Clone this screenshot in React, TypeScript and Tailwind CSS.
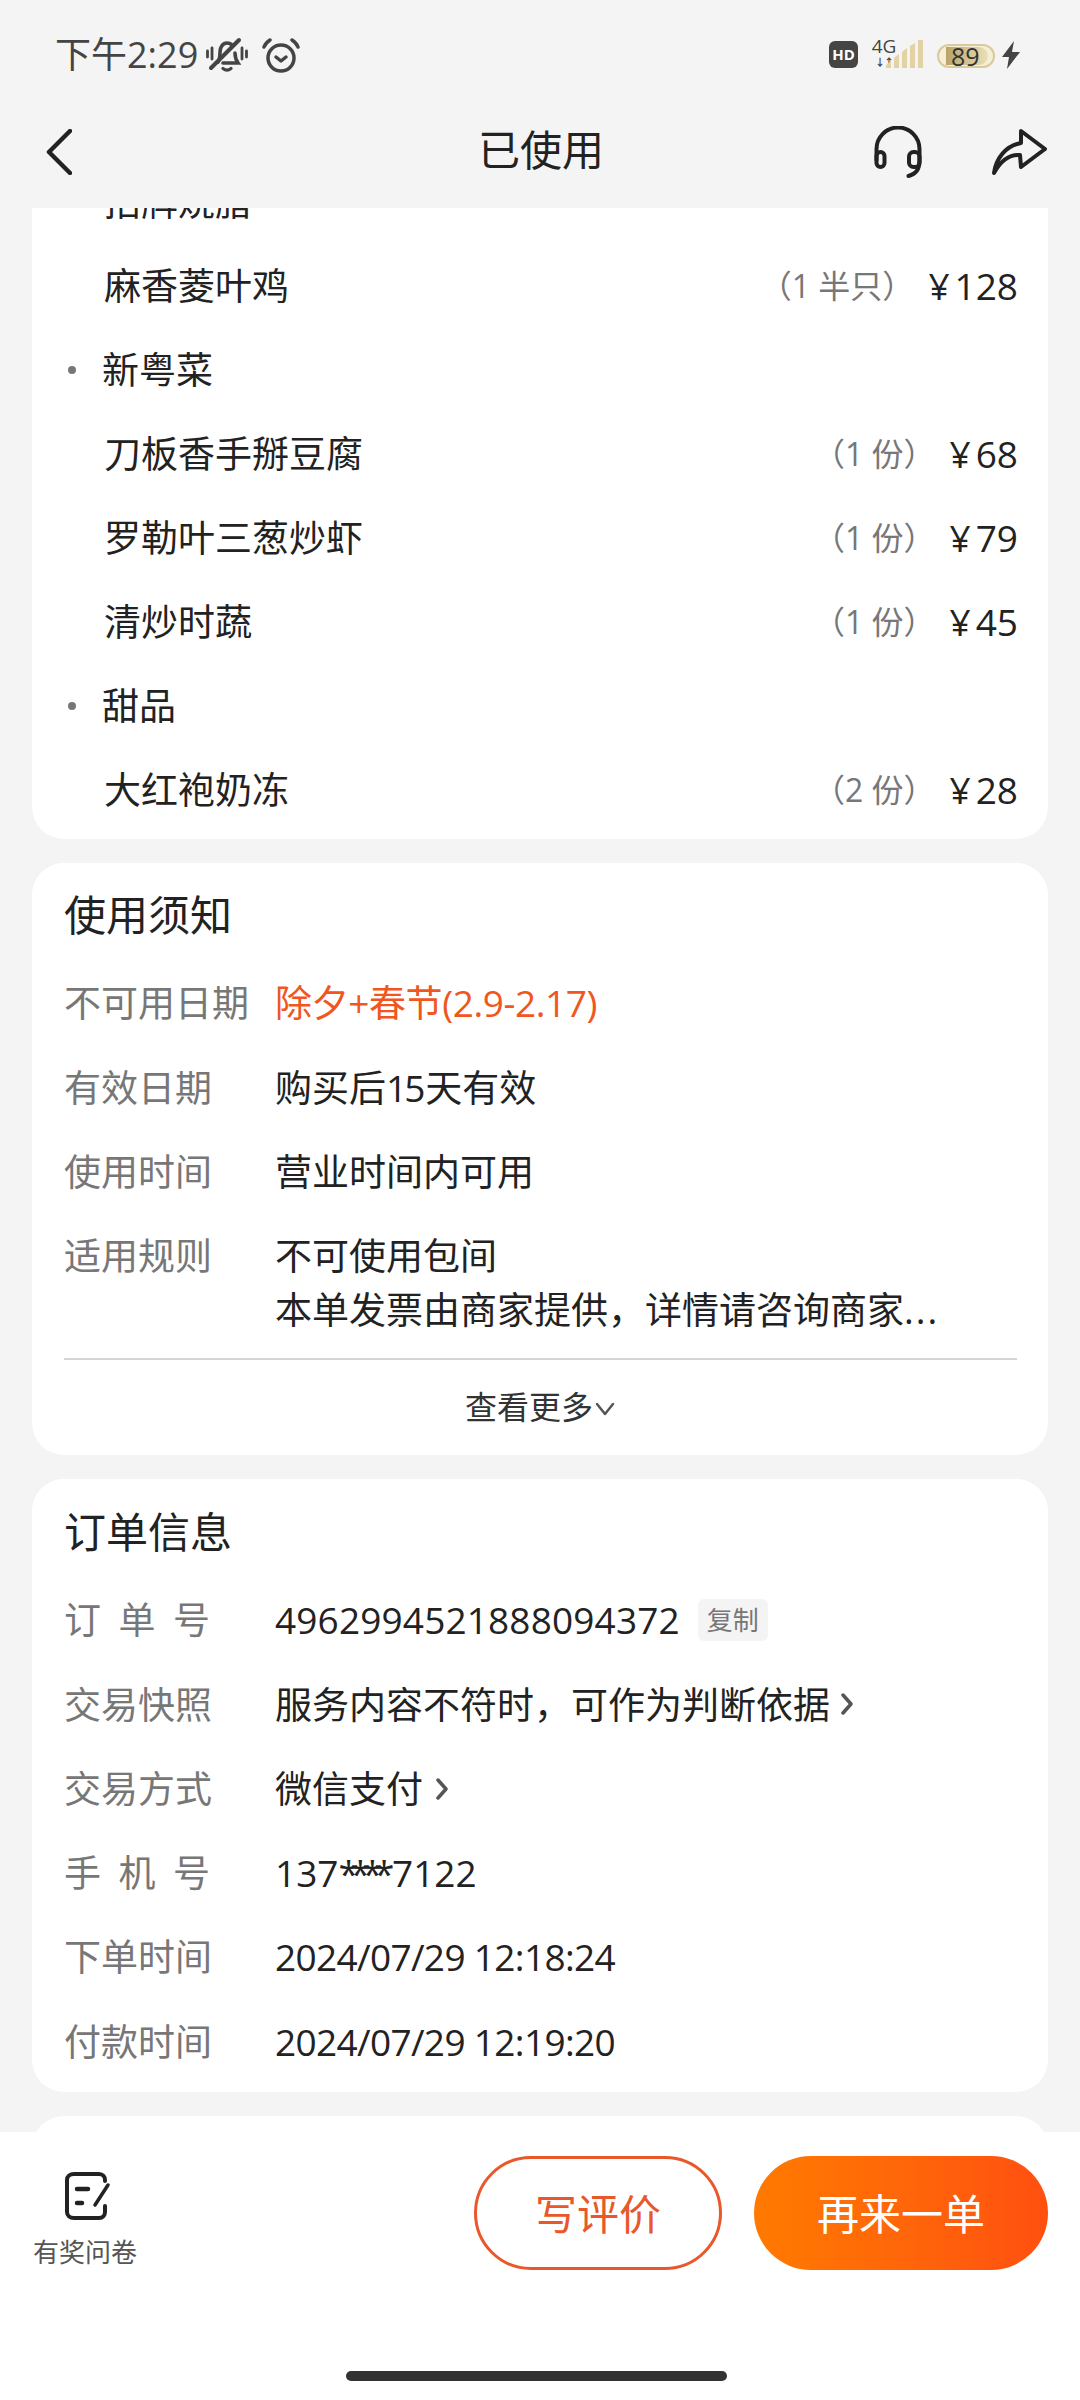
import React from 'react'

const FONT = 'font-["Open_Sans","Noto_Sans_CJK_SC",sans-serif]'

function MuteBell() {
    return (
        <svg width="42" height="36" viewBox="0 0 42 36" fill="none" stroke="#444" strokeWidth="3" strokeLinecap="round">
            <path d="M1.5 14v6M6 11v11M36 11v11M40.5 14v6" strokeWidth="2.800" />
            <path d="M12 25c2-3 2-6 2-10 0-5 3-9 7-9 2 0 4 .8 5.500 2.500M29 16c0 4 1 7 3 10H17" strokeWidth="3.600" />
            <path d="M17 31.500c2.500 2 5.500 2 8 0" strokeWidth="3.200" />
            <path d="M5 31 33 3" strokeWidth="4" />
        </svg>
    )
}

function Alarm() {
    return (
        <svg width="38" height="35" viewBox="0 0 38 35" fill="none" stroke="#444" strokeWidth="3.500" strokeLinecap="round" strokeLinejoin="round">
            <circle cx="19" cy="20" r="13" />
            <path d="M14 19l5 4 5-4" />
            <path d="M2 9c1-3 3-5 6-7M36 9c-1-3-3-5-6-7" />
        </svg>
    )
}

function SignalBars() {
    return (
        <svg width="38" height="28" viewBox="0 0 38 28">
            <path d="M0 28v-3l5-4v7zM8 28v-10l5-4v14zM16 28v-16l5-4v20zM24 28v-22l5-3v25zM32 28v-28l5-1v29z" fill="#e3d3a4" />
        </svg>
    )
}

function Bolt() {
    return (
        <svg width="18" height="28" viewBox="0 0 18 28" fill="#444">
            <path d="M12 0 0 16h7l-2 12L18 11h-8z" />
        </svg>
    )
}

function StatusBar() {
    return (
        <div className="flex h-[100px] items-start justify-between pl-[55px] pr-[60px] pt-[37px]">
            <div className="flex items-center">
                <span className="text-[36px] leading-[36px] text-[#444]">下午2:29</span>
                <span className="ml-[8px]"><MuteBell /></span>
                <span className="ml-[14px]"><Alarm /></span>
            </div>
            <div className="flex items-start">
                <div className="mt-[4px] flex h-[27px] w-[29px] items-center justify-center rounded-[6px] bg-[#444] text-[15px] font-bold leading-none text-white">HD</div>
                <div className="ml-[12px] flex h-[32px] w-[28px] flex-col items-center">
                    <span className="text-[19px] leading-[19px] text-[#444]">4G</span>
                    <span className="mt-[1px] text-[10px] font-bold leading-[11px] tracking-[-1px] text-[#444]">↓↑</span>
                </div>
                <div className="ml-[-12px] mt-[3px]"><SignalBars /></div>
                <div className="relative ml-[13px] mt-[7px] h-[24px] w-[58px] rounded-full border-2 border-[#d9c99b] bg-[#f6efd8]">
                    <div className="ml-[7px] mt-[1px] h-[18px] w-[42px] rounded-r-full bg-gradient-to-r from-[#b9a468] to-[#eadfb8]"></div>
                    <span className="absolute left-[12px] top-[-3px] text-[25px] leading-[26px] text-[#333]">89</span>
                </div>
                <div className="ml-[7px] mt-[4px]"><Bolt /></div>
            </div>
        </div>
    )
}

function NavBar() {
    return (
        <div className="relative mb-[4px] flex h-[104px] items-center justify-between pl-[46px] pr-[33px]">
            <svg width="26" height="46" viewBox="0 0 26 46" fill="none" stroke="#222" strokeWidth="4.500" strokeLinecap="round" strokeLinejoin="round">
                <path d="M24 2 3 23l21 21" />
            </svg>
            <span className="absolute left-[478px] top-[26px] text-[42px] leading-[48px] text-[#222]">已使用</span>
            <div className="flex items-center">
                <svg width="48" height="52" viewBox="0 0 48 52" fill="none" stroke="#222" strokeWidth="4" strokeLinecap="round" strokeLinejoin="round">
                    <path d="M2.500 34V23a21.500 21.500 0 0 1 43 0v12c0 8-3 13-11 15" />
                    <rect x="2.500" y="26" width="8" height="15" rx="4" />
                    <rect x="35" y="26" width="10.500" height="15" rx="4.500" />
                </svg>
                <svg className="ml-[69px]" width="56" height="48" viewBox="0 0 56 48" fill="none" stroke="#222" strokeWidth="4" strokeLinecap="round" strokeLinejoin="round">
                    <path d="M3 45C5 31 14 18 30 15V3l24 18-24 18-1-12C18 26 9 34 3 45Z" />
                </svg>
            </div>
        </div>
    )
}

function CategoryRow({ name }: { name: string }) {
    return (
        <div className="flex h-[84px] items-center">
            <span className="ml-[36px] h-[8px] w-[8px] rounded-full bg-[#777]"></span>
            <span className="ml-[26px] text-[37px] text-[#222]">{name}</span>
        </div>
    )
}

function DishRow({ name, qty, price }: { name: string; qty?: string; price?: string }) {
    return (
        <div className="flex h-[84px] items-center justify-between pl-[72px] pr-[30px]">
            <span className="text-[37px] text-[#222]">{name}</span>
            {price && (
                <div className="flex items-center">
                    <span className="text-[32px] text-[#777]">（{qty}）</span>
                    <span className="ml-[14px] text-[37px] text-[#222]">¥<span className="ml-[5px]">{price}</span></span>
                </div>
            )}
        </div>
    )
}

function InfoRow({ label, children }: { label: React.ReactNode; children: React.ReactNode }) {
    return (
        <div className="flex h-[84.3px] items-center px-[32px]">
            <div className="w-[211px] shrink-0 text-[37px] text-[#777]">{label}</div>
            <div className="flex items-center text-[37px] text-[#222]">{children}</div>
        </div>
    )
}

function SpacedLabel({ text }: { text: string }) {
    return (
        <div className="flex w-[146px] justify-between">
            {text.split('').map((c, i) => <span key={i}>{c}</span>)}
        </div>
    )
}

function Chevron({ className }: { className?: string }) {
    return (
        <svg className={className} width="14" height="22" viewBox="0 0 14 22" fill="none" stroke="#555" strokeWidth="3.500" strokeLinecap="round" strokeLinejoin="round">
            <path d="M3 2l8 9-8 9" />
        </svg>
    )
}

export default function App() {
    return (
        <div className={`relative flex h-[2400px] w-[1080px] flex-col overflow-hidden bg-[#f4f4f4] ${FONT}`}>
            <StatusBar />
            <NavBar />

            <div className="min-h-0 flex-1 overflow-hidden">
                <div className="mx-[32px] mt-[-48px] flex flex-col gap-6">
                    <div className="rounded-[32px] bg-white pb-[7px]">
                        <DishRow name="招牌烧腊" />
                        <DishRow name="麻香菱叶鸡" qty="1 半只" price="128" />
                        <CategoryRow name="新粤菜" />
                        <DishRow name="刀板香手掰豆腐" qty="1 份" price="68" />
                        <DishRow name="罗勒叶三葱炒虾" qty="1 份" price="79" />
                        <DishRow name="清炒时蔬" qty="1 份" price="45" />
                        <CategoryRow name="甜品" />
                        <DishRow name="大红袍奶冻" qty="2 份" price="28" />
                    </div>

                    <div className="rounded-[32px] bg-white pt-[26px]">
                        <h2 className="mb-[20px] px-[32px] text-[42px] font-normal leading-[52px] text-[#222]">使用须知</h2>
                        <InfoRow label="不可用日期"><span className="tracking-[-0.4px] text-[#f0561d]">除夕+春节(2.9-2.17)</span></InfoRow>
                        <InfoRow label="有效日期"><span>购买后<span className="tracking-[-3px]">15</span><span className="ml-[3px]">天有效</span></span></InfoRow>
                        <InfoRow label="使用时间">营业时间内可用</InfoRow>
                        <div className="flex px-[32px] pt-[15px]">
                            <div className="w-[211px] shrink-0 text-[37px] leading-[54px] text-[#777]">适用规则</div>
                            <div className="text-[37px] leading-[54px] text-[#222]">
                                <p>不可使用包间</p>
                                <p>本单发票由商家提供，详情请咨询商家<span className="tracking-[2px]">...</span></p>
                            </div>
                        </div>
                        <div className="ml-[32px] mr-[31px] mt-[21px] h-[2px] bg-[#d4d4d4]"></div>
                        <div className="flex h-[95px] items-center justify-center text-[32px] text-[#333]">
                            查看更多
                            <svg className="ml-[2px] mt-[4px]" width="20" height="14" viewBox="0 0 20 14" fill="none" stroke="#555" strokeWidth="2.500" strokeLinecap="round" strokeLinejoin="round">
                                <path d="M2 2l8 10 8-10" />
                            </svg>
                        </div>
                    </div>

                    <div className="rounded-[32px] bg-white pb-[8px] pt-[27px]">
                        <h2 className="mb-[20px] px-[32px] text-[42px] font-normal leading-[52px] text-[#222]">订单信息</h2>
                        <InfoRow label={<SpacedLabel text="订单号" />}>
                            <span className="tracking-[0.15px]">4962994521888094372</span>
                            <span className="ml-[18px] flex h-[42px] w-[70px] items-center justify-center rounded-[6px] bg-[#f4f4f4] text-[26px] text-[#777]">复制</span>
                        </InfoRow>
                        <InfoRow label="交易快照">服务内容不符时，可作为判断依据<Chevron className="ml-[10px]" /></InfoRow>
                        <InfoRow label="交易方式">微信支付<Chevron className="ml-[12px]" /></InfoRow>
                        <InfoRow label={<SpacedLabel text="手机号" />}><span>137<span className="tracking-[-8.500px]">****</span><span className="ml-[6px]">7122</span></span></InfoRow>
                        <InfoRow label="下单时间"><span className="tracking-[-0.65px]">2024/07/29 12:18:24</span></InfoRow>
                        <InfoRow label="付款时间"><span className="tracking-[-0.65px]">2024/07/29 12:19:20</span></InfoRow>
                    </div>

                    <div className="h-[200px] rounded-[32px] bg-white"></div>
                </div>
            </div>

            <div className="relative h-[268px] shrink-0 bg-white">
                <div className="flex items-start justify-between pl-[32px] pr-[32px] pt-[24px]">
                    <div className="flex w-[106px] flex-col items-center pt-[16px]">
                        <svg className="ml-[5px]" width="46" height="48" viewBox="0 0 46 48" fill="none" stroke="#222" strokeWidth="4" strokeLinecap="round" strokeLinejoin="round">
                            <path d="M40 9V8c0-3-2-6-6-6H9C5 2 2 4 2 8v32c0 4 3 6 7 6h25c4 0 6-3 6-6v-6" />
                            <path d="M12 17h11M12 31h5" strokeWidth="4.500" />
                            <path d="M30 33 43 13" strokeWidth="3.500" />
                        </svg>
                        <span className="mt-[14px] whitespace-nowrap text-[26px] leading-[36px] text-[#555]">有奖问卷</span>
                    </div>
                    <div className="flex items-center">
                        <div className="flex h-[114px] w-[248px] items-center justify-center rounded-[57px] border-[3px] border-[#e8582a] text-[42px] text-[#e8582a]">写评价</div>
                        <div className="ml-[32px] flex h-[114px] w-[294px] items-center justify-center rounded-[57px] bg-gradient-to-r from-[#ff7a00] to-[#ff4f10] text-[42px] text-white">再来一单</div>
                    </div>
                </div>
                <div className="absolute bottom-[19px] left-[346px] h-[10px] w-[381px] rounded-full bg-[#333]"></div>
            </div>
        </div>
    )
}
